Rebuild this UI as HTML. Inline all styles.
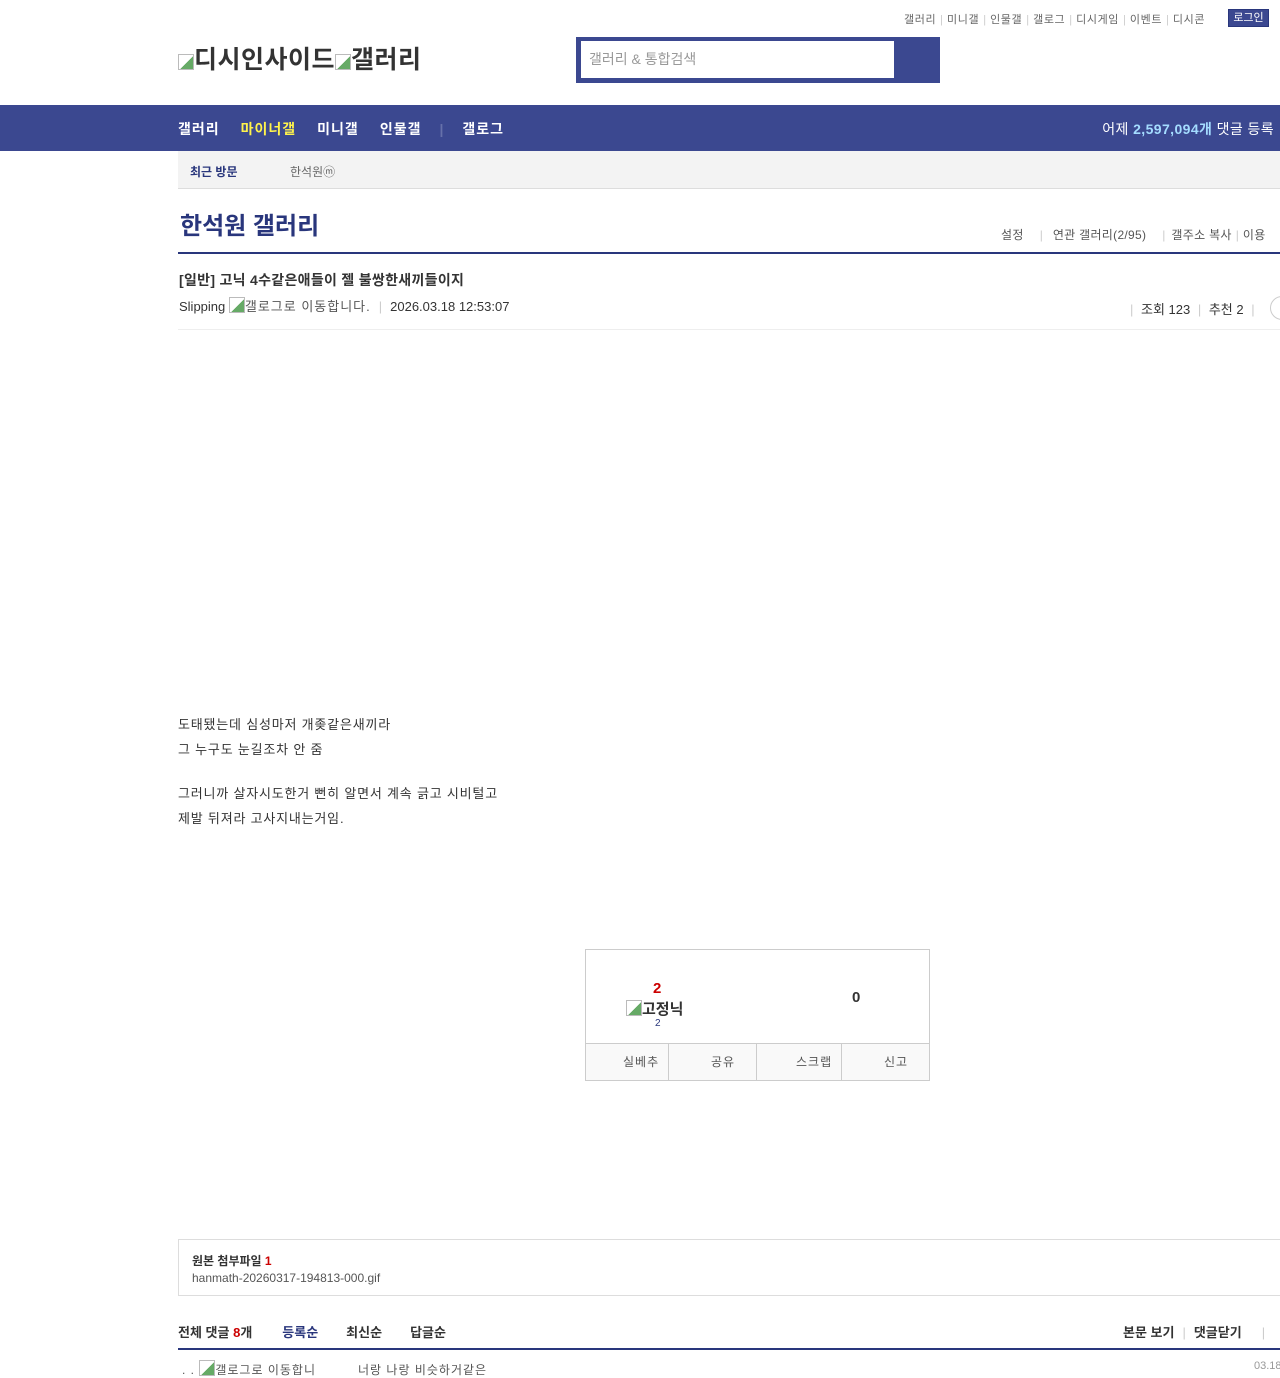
<!DOCTYPE html>
<html><head><meta charset="utf-8"><style>
*{margin:0;padding:0;box-sizing:border-box}
body{width:1280px;height:1373px;overflow:hidden;background:#fff;font-family:"Liberation Sans","Noto Sans CJK KR",sans-serif;color:#333;position:relative}
.a{position:absolute;white-space:nowrap}
.sep{color:#ccc;margin:0 4px;letter-spacing:0}
.img{display:inline-block;width:16px;height:16px;border:1px solid #bbb;background:linear-gradient(135deg,#fff 55%,#6a6 55%);vertical-align:-2px}
</style></head><body>
<div class="a" style="top:11px;left:904px;font-size:11px;color:#666;letter-spacing:0.6px">갤러리<span class="sep">|</span>미니갤<span class="sep">|</span>인물갤<span class="sep">|</span>갤로그<span class="sep">|</span>디시게임<span class="sep">|</span>이벤트<span class="sep">|</span>디시콘</div>
<div class="a" style="top:9px;left:1228px;width:41px;height:18px;background:#3b4890;border:1px solid #29367c;color:#fff;font-size:11px;text-align:center;line-height:16px">로그인</div>
<div class="a" style="top:40px;left:178px;font-size:25px;font-weight:bold;color:#333;letter-spacing:0.5px"><span class="img"></span>디시인사이드<span class="img"></span>갤러리</div>
<div class="a" style="top:37px;left:576px;width:364px;height:46px;background:#3b4890"></div>
<div class="a" style="top:41px;left:581px;width:313px;height:37px;background:#fff;font-size:14px;color:#999;line-height:37px;padding-left:8px">갤러리 &amp; 통합검색</div>
<div class="a" style="top:105px;left:0;width:1280px;height:46px;background:#3b4890"></div>
<div class="a" style="top:119px;left:178px;font-size:14px;font-weight:bold;color:#fff;letter-spacing:1px">갤러리<span style="color:#fff34b;margin-left:21px">마이너갤</span><span style="margin-left:21px">미니갤</span><span style="margin-left:21px">인물갤</span><span style="color:#6671aa;margin:0 18px">|</span>갤로그</div>
<div class="a" style="top:119px;right:6px;font-size:14px;color:#fff;letter-spacing:0.4px">어제 <b style="color:#a4dcff">2,597,094개</b> 댓글 등록</div>
<div class="a" style="top:151px;left:178px;width:1102px;height:38px;background:#f3f3f3;border-bottom:1px solid #ddd"></div>
<div class="a" style="top:163px;left:190px;font-size:12px;font-weight:bold;color:#29367c">최근 방문</div>
<div class="a" style="top:163px;left:290px;font-size:12px;color:#666">한석원ⓜ</div>
<div class="a" style="top:206px;left:180px;font-size:24px;font-weight:bold;color:#29367c">한석원 갤러리</div>
<div class="a" style="top:226px;left:1001px;font-size:12px;color:#555;letter-spacing:0.3px">설정<span class="sep" style="margin:0 10px 0 16px">|</span>연관 갤러리(2/95)<span class="sep" style="margin:0 6px 0 16px">|</span>갤주소 복사<span class="sep">|</span>이용</div>
<div class="a" style="top:252px;left:178px;width:1102px;height:2px;background:#29367c"></div>
<div class="a" style="top:270px;left:179px;font-size:14px;font-weight:bold;color:#333;letter-spacing:0.3px">[일반] 고닉 4수같은애들이 젤 불쌍한새끼들이지</div>
<div class="a" style="top:296px;left:179px;font-size:13px;color:#333">Slipping <span style="color:#555;letter-spacing:1px"><span class="img"></span>갤로그로 이동합니다.</span><span class="sep" style="margin:0 8px">|</span>2026.03.18 12:53:07</div>
<div class="a" style="top:299px;left:1126px;font-size:13px;color:#333"><span class="sep">|</span> 조회 123 <span class="sep">|</span> 추천 2 <span class="sep">|</span></div>
<div class="a" style="top:296px;left:1270px;width:24px;height:24px;border:1px solid #ccc;border-radius:50%"></div>
<div class="a" style="top:329px;left:178px;width:1102px;height:1px;background:#eee"></div>
<div class="a" style="top:713px;left:178px;font-size:13px;line-height:24.5px;color:#333;letter-spacing:0.8px">도태됐는데 심성마저 개좆같은새끼라<br>그 누구도 눈길조차 안 줌<br><div style="height:20px"></div>그러니까 살자시도한거 뻔히 알면서 계속 긁고 시비털고<br>제발 뒤져라 고사지내는거임.</div>
<div class="a" style="top:949px;left:585px;width:345px;height:132px;border:1px solid #ccc"></div>
<div class="a" style="top:980px;left:653px;font-size:15px;font-weight:bold;color:#c00">2</div>
<div class="a" style="top:998px;left:626px;font-size:15px;font-weight:bold;color:#333"><span class="img"></span>고정닉</div>
<div class="a" style="top:1018px;left:655px;font-size:10px;color:#29367c">2</div>
<div class="a" style="top:989px;left:852px;font-size:15px;font-weight:bold;color:#333">0</div>
<div class="a" style="top:1043px;left:586px;width:343px;height:37px;background:#f9f9f9;border-top:1px solid #ccc;display:flex;font-size:12px;color:#555;letter-spacing:1px">
<div style="flex:1;border-right:1px solid #ccc;line-height:37px;padding-left:37px">실베추</div>
<div style="flex:1;border-right:1px solid #ccc;line-height:37px;padding-left:42px">공유</div>
<div style="flex:1;border-right:1px solid #ccc;line-height:37px;padding-left:39px">스크랩</div>
<div style="flex:1;line-height:37px;padding-left:42px">신고</div></div>
<div class="a" style="top:1239px;left:178px;width:1110px;height:57px;border:1px solid #ddd"></div>
<div class="a" style="top:1252px;left:192px;font-size:12px;font-weight:bold;color:#333">원본 첨부파일 <span style="color:#c00">1</span></div>
<div class="a" style="top:1271px;left:192px;font-size:12px;color:#555">hanmath-20260317-194813-000.gif</div>
<div class="a" style="top:1322px;left:178px;font-size:13px;font-weight:bold;color:#333">전체 댓글 <span style="color:#c00">8</span>개<span style="color:#29367c;margin-left:30px">등록순</span><span style="margin-left:28px">최신순</span><span style="margin-left:28px">답글순</span></div>
<div class="a" style="top:1322px;left:1123px;font-size:13px;font-weight:bold;color:#333">본문 보기<span class="sep" style="margin:0 8px;font-weight:normal">|</span>댓글닫기<span class="sep" style="margin-left:20px;font-weight:normal">|</span></div>
<div class="a" style="top:1348px;left:178px;width:1102px;height:2px;background:#29367c"></div>
<div class="a" style="top:1360px;left:182px;font-size:12px;color:#555;letter-spacing:1px">. . <span class="img"></span>갤로그로 이동합니<span style="margin-left:42px">너랑 나랑 비슷하거같은</span></div>
<div class="a" style="top:1360px;left:1254px;font-size:11px;color:#999">03.18</div>
</body></html>
